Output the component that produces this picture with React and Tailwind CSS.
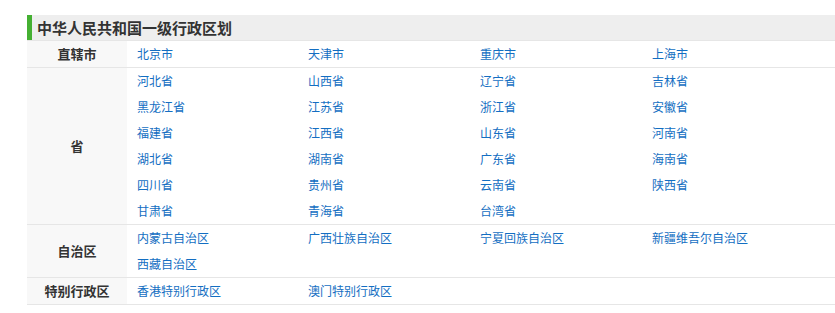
import React from "react";

const rows = [
  { label: "直辖市", items: ["北京市", "天津市", "重庆市", "上海市"] },
  {
    label: "省",
    items: [
      "河北省", "山西省", "辽宁省", "吉林省",
      "黑龙江省", "江苏省", "浙江省", "安徽省",
      "福建省", "江西省", "山东省", "河南省",
      "湖北省", "湖南省", "广东省", "海南省",
      "四川省", "贵州省", "云南省", "陕西省",
      "甘肃省", "青海省", "台湾省",
    ],
  },
  { label: "自治区", items: ["内蒙古自治区", "广西壮族自治区", "宁夏回族自治区", "新疆维吾尔自治区", "西藏自治区"] },
  { label: "特别行政区", items: ["香港特别行政区", "澳门特别行政区"] },
];

export default function App() {
  return (
    <div
      className="bg-white w-[835px] h-[313px] overflow-hidden pt-[15px] pl-[27px]"
      style={{ fontFamily: '"Noto Sans CJK SC", "Noto Sans", sans-serif' }}
    >
      <div className="h-[25px] border-l-[5px] border-[#45b032] bg-[#eeeeee] pl-[5px] text-[15px] font-bold leading-[25px] text-[#333333]">
        中华人民共和国一级行政区划
      </div>
      <div className="border-b border-[#e6e6e6]">
        {rows.map((r) => (
          <div key={r.label} className="flex border-t border-[#e6e6e6]">
            <div className="w-[100px] shrink-0 bg-[#f8f8f8] flex items-center justify-center text-[13px] font-bold text-[#333333]">
              {r.label}
            </div>
            <div className="grid grid-cols-[171px_172px_172px_172px] pl-[10px] text-[12px] leading-[26px] text-[#136ec2]">
              {r.items.map((it) => (
                <a key={it} className="cursor-pointer whitespace-nowrap">{it}</a>
              ))}
            </div>
          </div>
        ))}
      </div>
    </div>
  );
}
